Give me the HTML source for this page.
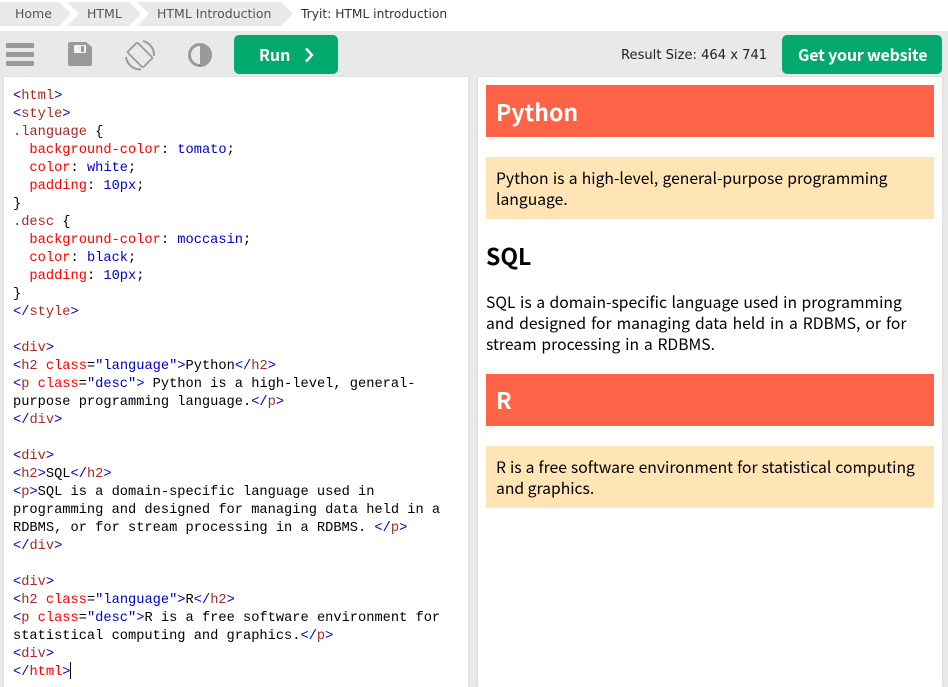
<!DOCTYPE html>
<html><head><meta charset="utf-8">
<style>
html,body{margin:0;padding:0;width:948px;height:687px;overflow:hidden;background:#fff}
body{position:relative;font-family:"Liberation Sans",sans-serif}
.a{position:absolute;white-space:nowrap}
.k{font-family:"Noto Sans CJK KR","Liberation Sans",sans-serif}
#code{left:13px;top:88px;font:13.7px/18px "Liberation Mono",monospace;color:#000;white-space:pre;margin:0}
#code i{font-style:normal;color:#0000cd}
#code b{font-weight:normal;color:#a52a2a}
#code u{text-decoration:none;color:#f00}
.bc{font:12.5px/26px "DejaVu Sans",sans-serif;color:#555;top:1px}
.t{font-family:"Noto Sans CJK KR","Liberation Sans",sans-serif;font-size:15.7px;line-height:21px;color:#000;white-space:nowrap}
.t span{display:block}
</style></head><body>
<svg class="a" style="left:0;top:2px" width="300" height="24"><polygon points="0,0 59,0 71,12 59,24 0,24" fill="#e7e9eb"/><polygon points="67,0 129,0 141,12 129,24 79,24 67,24 79,12" fill="#e7e9eb"/><polygon points="137,0 281,0 293,12 281,24 137,24 149,12" fill="#e7e9eb"/></svg>
<div class="a bc" style="left:15px">Home</div>
<div class="a bc" style="left:87px">HTML</div>
<div class="a bc" style="left:157px">HTML Introduction</div>
<div class="a bc" style="left:301px;font-size:12.25px;color:#333">Tryit: HTML introduction</div>
<div class="a" style="left:0;top:31px;width:948px;height:656px;background:#e7e9eb"></div>
<svg class="a" style="left:0;top:31px" width="234" height="46">
<rect x="6" y="12" width="28" height="5" rx="1" fill="#9a9a9a"/><rect x="6" y="21" width="28" height="5" rx="1" fill="#9a9a9a"/><rect x="6" y="30" width="28" height="5" rx="1" fill="#9a9a9a"/>
<path d="M70 11h16l6 5v17a2 2 0 0 1-2 2H70a2 2 0 0 1-2-2V13a2 2 0 0 1 2-2z" fill="#9a9a9a"/><rect x="74" y="14" width="12" height="8" rx="1" fill="#f2f3f4"/><rect x="81" y="15" width="3" height="6" fill="#9a9a9a"/>
<rect x="129" y="17" width="22" height="14" rx="1.5" fill="none" stroke="#9a9a9a" stroke-width="1.8" transform="rotate(45 140 24)"/>
<path d="M143 10A14.5 14.5 0 0 1 154 25M126 26A14.5 14.5 0 0 0 141 38.5" fill="none" stroke="#9a9a9a" stroke-width="2"/>
<circle cx="200" cy="24" r="10.5" fill="#e7e9eb" stroke="#9a9a9a" stroke-width="3"/><path d="M200 13a11 11 0 0 1 0 22z" fill="#9a9a9a"/>
</svg>
<div class="a" style="left:234px;top:35px;width:104px;height:39px;background:#04aa6d;border-radius:5px"></div>
<div class="a k" style="left:259px;top:42px;font-size:16px;line-height:24px;font-weight:700;color:#fff">Run</div>
<svg class="a" style="left:302px;top:46px" width="14" height="18"><path d="M4 2.5l6 6.5-6 6.5" fill="none" stroke="#fff" stroke-width="2.4"/></svg>
<div class="a bc" style="left:621px;top:43px;color:#222;font-size:13.1px">Result Size: 464 x 741</div>
<div class="a" style="left:782px;top:35px;width:160px;height:39px;background:#04aa6d;border-radius:5px"></div>
<div class="a k" style="left:798px;top:42px;font-size:16px;line-height:24px;font-weight:700;color:#fff;letter-spacing:-.2px">Get your website</div>
<div class="a" style="left:4px;top:77px;width:464px;height:610px;background:#fff;box-shadow:0 0 2px #ccc"></div>
<div class="a" style="left:478px;top:77px;width:464px;height:610px;background:#fff;box-shadow:0 0 2px #ccc"></div>
<pre class="a" id="code"><i>&lt;</i><b>html</b><i>&gt;</i>
<i>&lt;</i><b>style</b><i>&gt;</i>
<b>.language</b> {
<u>  background-color</u>: <i>tomato</i>;
<u>  color</u>: <i>white</i>;
<u>  padding</u>: <i>10px</i>;
}
<b>.desc</b> {
<u>  background-color</u>: <i>moccasin</i>;
<u>  color</u>: <i>black</i>;
<u>  padding</u>: <i>10px</i>;
}
<i>&lt;/</i><b>style</b><i>&gt;</i>

<i>&lt;</i><b>div</b><i>&gt;</i>
<i>&lt;</i><b>h2</b> <u>class</u>=<i>"language"&gt;</i>Python<i>&lt;/</i><b>h2</b><i>&gt;</i>
<i>&lt;</i><b>p</b> <u>class</u>=<i>"desc"&gt;</i> Python is a high-level, general-
purpose programming language.<i>&lt;/</i><b>p</b><i>&gt;</i>
<i>&lt;/</i><b>div</b><i>&gt;</i>

<i>&lt;</i><b>div</b><i>&gt;</i>
<i>&lt;</i><b>h2</b><i>&gt;</i>SQL<i>&lt;/</i><b>h2</b><i>&gt;</i>
<i>&lt;</i><b>p</b><i>&gt;</i>SQL is a domain-specific language used in
programming and designed for managing data held in a
RDBMS, or for stream processing in a RDBMS. <i>&lt;/</i><b>p</b><i>&gt;</i>
<i>&lt;/</i><b>div</b><i>&gt;</i>

<i>&lt;</i><b>div</b><i>&gt;</i>
<i>&lt;</i><b>h2</b> <u>class</u>=<i>"language"&gt;</i>R<i>&lt;/</i><b>h2</b><i>&gt;</i>
<i>&lt;</i><b>p</b> <u>class</u>=<i>"desc"&gt;</i>R is a free software environment for
statistical computing and graphics.<i>&lt;/</i><b>p</b><i>&gt;</i>
<i>&lt;</i><b>div</b><i>&gt;</i>
<i>&lt;/</i><u>html</u><i>&gt;</i></pre>
<div class="a" style="left:70px;top:662px;width:1px;height:17px;background:#000"></div>
<div class="a" style="left:486px;top:85px;width:448px;height:52px;background:#ff6347"></div>
<div class="a k" style="left:496px;top:94px;font-size:23px;line-height:34px;font-weight:700;color:#fff">Python</div>
<div class="a" style="left:486px;top:157px;width:448px;height:62px;background:#ffe4b5"></div>
<div class="a t" style="left:496px;top:167px"><span style="word-spacing:.7px">Python is a high-level, general-purpose programming</span><span>language.</span></div>
<div class="a k" style="left:486px;top:238px;font-size:23px;line-height:34px;font-weight:700;color:#000">SQL</div>
<div class="a t" style="left:486px;top:291px"><span style="word-spacing:1px">SQL is a domain-specific language used in programming</span><span style="word-spacing:1.5px">and designed for managing data held in a RDBMS, or for</span><span style="word-spacing:1.3px">stream processing in a RDBMS.</span></div>
<div class="a" style="left:486px;top:374px;width:448px;height:52px;background:#ff6347"></div>
<div class="a k" style="left:496px;top:382px;font-size:23px;line-height:34px;font-weight:700;color:#fff">R</div>
<div class="a" style="left:486px;top:446px;width:448px;height:62px;background:#ffe4b5"></div>
<div class="a t" style="left:496px;top:456px"><span style="word-spacing:.5px">R is a free software environment for statistical computing</span><span>and graphics.</span></div>
</body></html>
